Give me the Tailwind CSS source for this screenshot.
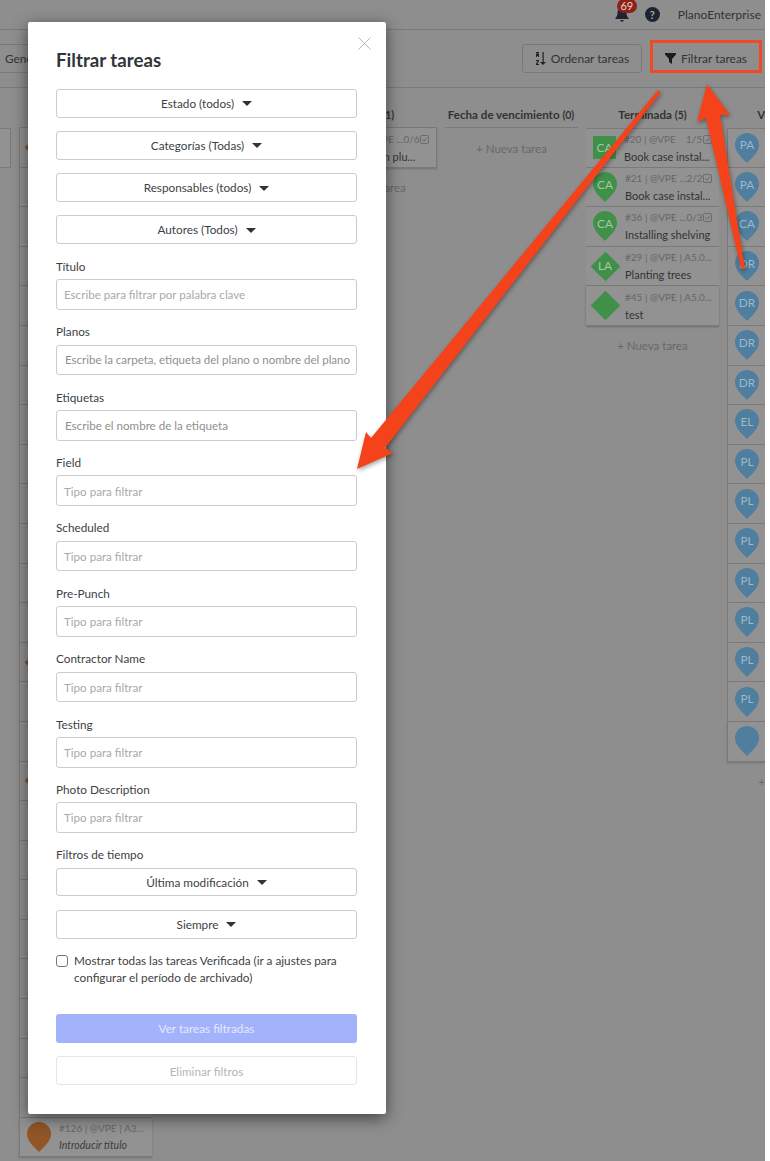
<!DOCTYPE html>
<html lang="es">
<head>
<meta charset="utf-8">
<title>Filtrar tareas</title>
<script src="https://cdn.jsdelivr.net/npm/@tailwindcss/browser@4"></script>
</head>
<body>
<div class="relative w-[770px] h-[1161px] overflow-hidden bg-white font-[Lato,sans-serif] text-[11.75px] text-[#2f2f2f]">
  <div class="w-[765px] h-[1161px] overflow-hidden bg-[#8e8e8f]">
    <!-- header -->
    <div class="h-[30px] border-b border-[#7a7a7a] flex items-center justify-end pr-[4px]">
      <div class="relative w-[24px] h-[30px] mr-[7px]">
        <svg class="absolute left-[1px] top-[7px]" width="14" height="15" viewBox="0 0 14 15"><path fill="#1d2430" d="M7 0c.7 0 1.2.5 1.2 1.1C10.400 1.700 11.500 3.500 11.500 6c0 2.800.8 3.800 2 5v1H.5v-1c1.200-1.200 2-2.200 2-5 0-2.500 1.100-4.300 3.300-4.900C5.800.5 6.300 0 7 0zM5.300 13h3.400a1.700 1.700 0 0 1-3.400 0z"/></svg>
        <span class="absolute left-[3px] top-[-1px] w-[20px] h-[14px] rounded-full bg-[#8f1f17] text-[#e6d5d3] text-[11px] leading-[14px] text-center">69</span>
      </div>
      <span class="w-[15px] h-[15px] rounded-full bg-[#1d2430] text-[#a5a5a5] text-[11px] font-bold leading-[15px] text-center mr-[18px]">?</span>
      <span class="text-[#333] text-[12px] leading-[30px]">PlanoEnterprise</span>
    </div>
    <!-- toolbar -->
    <div class="h-[58px] border-b border-[#7a7a7a] flex items-center justify-end pr-[3px] pb-[1px]">
      <div class="mr-auto -ml-[8px] h-[29px] w-[70px] border border-[#7a7a7a] rounded-[3px] flex items-center pl-[12px] pt-[1px] text-[#333]">Generar</div>
      <div class="h-[29px] w-[120px] border border-[#7a7a7a] rounded-[3px] flex items-center justify-center gap-[5px] pt-[1px] text-[12px] text-[#333] mr-[8px]">
        <svg width="11" height="13" viewBox="0 0 11 13"><path fill="#222" d="M1 0h3v1H3.300v1H4v3H3V4H2v1H1V2h.7V1H1zM1 8h3v1.200L2.300 12H4v1H1v-1.200L2.700 9H1zM7.500 0h1.200v10H11L8 13 5 10h2.500z"/></svg>
        <span>Ordenar tareas</span>
      </div>
      <div class="h-[29px] w-[112px] rounded-[3px] flex items-center justify-center gap-[5px] pt-[1px] text-[12px] text-[#333]">
        <svg width="11" height="11" viewBox="0 0 11 11"><path fill="#1c1c1c" d="M0 0h11v1.500L7 6v5L4 9V6L0 1.500z"/></svg>
        <span>Filtrar tareas</span>
      </div>
    </div>
    <!-- columns -->
    <div class="flex gap-[8px] -ml-[122px] pt-[17px]">
      <!-- column 1, mostly cut off -->
      <div class="w-[133px] shrink-0">
        <div class="h-[23px]"></div>
        <div class="h-[39.6px] border border-[#7a7a7a] bg-[#929293] rounded-[1px]"></div>
      </div>
      <!-- column 2 -->
      <div class="w-[133px] shrink-0">
        <div class="h-[23px] border-b border-[#7a7a7a]"></div>
        <div class="h-[39.6px] border-b border-l border-[#7a7a7a] bg-[#929293] flex items-center pl-[8.500px]"><div class="w-[21px] h-[21px] rotate-45 bg-[#8a5124]"></div></div>
        <div class="h-[39.6px] border-b border-l border-[#7a7a7a] bg-[#929293]"></div>
        <div class="h-[39.6px] border-b border-l border-[#7a7a7a] bg-[#929293]"></div>
        <div class="h-[39.6px] border-b border-l border-[#7a7a7a] bg-[#929293]"></div>
        <div class="h-[39.6px] border-b border-l border-[#7a7a7a] bg-[#929293]"></div>
        <div class="h-[39.6px] border-b border-l border-[#7a7a7a] bg-[#929293]"></div>
        <div class="h-[39.6px] border-b border-l border-[#7a7a7a] bg-[#929293]"></div>
        <div class="h-[39.6px] border-b border-l border-[#7a7a7a] bg-[#929293]"></div>
        <div class="h-[39.6px] border-b border-l border-[#7a7a7a] bg-[#929293]"></div>
        <div class="h-[39.6px] border-b border-l border-[#7a7a7a] bg-[#929293]"></div>
        <div class="h-[39.6px] border-b border-l border-[#7a7a7a] bg-[#929293]"></div>
        <div class="h-[39.6px] border-b border-l border-[#7a7a7a] bg-[#929293]"></div>
        <div class="h-[39.6px] border-b border-l border-[#7a7a7a] bg-[#929293]"></div>
        <div class="h-[39.6px] border-b border-l border-[#7a7a7a] bg-[#929293] flex items-center pl-[8.500px]"><div class="w-[21px] h-[21px] rotate-45 bg-[#8a5124]"></div></div>
        <div class="h-[39.6px] border-b border-l border-[#7a7a7a] bg-[#929293]"></div>
        <div class="h-[39.6px] border-b border-l border-[#7a7a7a] bg-[#929293]"></div>
        <div class="h-[39.6px] border-b border-l border-[#7a7a7a] bg-[#929293] flex items-center pl-[8.500px]"><div class="w-[21px] h-[21px] rotate-45 bg-[#8a5124]"></div></div>
        <div class="h-[39.6px] border-b border-l border-[#7a7a7a] bg-[#929293]"></div>
        <div class="h-[39.6px] border-b border-l border-[#7a7a7a] bg-[#929293]"></div>
        <div class="h-[39.6px] border-b border-l border-[#7a7a7a] bg-[#929293]"></div>
        <div class="h-[39.6px] border-b border-l border-[#7a7a7a] bg-[#929293]"></div>
        <div class="h-[39.6px] border-b border-l border-[#7a7a7a] bg-[#929293]"></div>
        <div class="h-[39.6px] border-b border-l border-[#7a7a7a] bg-[#929293]"></div>
        <div class="h-[39.6px] border-b border-l border-[#7a7a7a] bg-[#929293]"></div>
        <div class="h-[39.6px] border-b border-l border-[#7a7a7a] bg-[#929293]"></div>
        <div class="h-[39.6px] border-b border-l border-[#7a7a7a] bg-[#929293] flex items-center gap-[8px] pl-[7px] shadow-[0_1px_2px_rgba(0,0,0,0.2)]">
          <svg class="shrink-0" width="24" height="30" viewBox="0 0 24 30"><path fill="#915526" d="M12 0a12 12 0 0 1 12 12c0 7-7 13-12 18C7 25 0 19 0 12A12 12 0 0 1 12 0z"/></svg>
          <div class="min-w-0 leading-[17px] whitespace-nowrap"><div class="text-[#666] text-[10px]">#126 | @VPE | A3...</div><div class="italic text-[#3d3d3d] text-[10.5px]">Introducir título</div></div>
        </div>
      </div>
      <div class="w-[136px] shrink-0"></div>
      <!-- column: activa -->
      <div class="w-[133px] shrink-0">
        <div class="h-[23px] border-b border-[#7a7a7a] text-center font-bold text-[11.6px] leading-[20px] text-[#333]">Activa <span class="text-[10.5px]">(1)</span></div>
        <div class="h-[39.6px] bg-[#929293] border-b border-r border-[#7a7a7a] pl-[38px] pr-[7px] pt-[3px] shadow-[0_1px_2px_rgba(0,0,0,0.2)]">
          <div class="flex items-center justify-between text-[#666] text-[10px] leading-[17px] whitespace-nowrap"><span>#12 | @VPE ...0/6</span><svg width="9" height="9" viewBox="0 0 10 10" fill="none" stroke="#666"><rect x=".5" y=".5" width="9" height="9" rx="1.500"/><path d="M2.500 5l2 2 3-4"/></svg></div>
          <div class="text-[#333] text-[11px] leading-[17px] whitespace-nowrap">Bathroom plu...</div>
        </div>
        <div class="h-[39px] leading-[40px] text-center text-[11.5px] text-[#686868]">+ Nueva tarea</div>
      </div>
      <!-- column: fecha -->
      <div class="w-[133px] shrink-0">
        <div class="h-[23px] border-b border-[#7a7a7a] text-center font-bold text-[11.6px] leading-[20px] pr-[1px] text-[#333] whitespace-nowrap">Fecha de vencimiento <span class="text-[10.5px]">(0)</span></div>
        <div class="h-[39px] leading-[42px] text-center text-[11.5px] text-[#686868]">+ Nueva tarea</div>
      </div>
      <!-- column: terminada -->
      <div class="w-[133px] shrink-0">
        <div class="h-[23px] text-center font-bold text-[11.6px] leading-[20px] text-[#333]">Terminada <span class="text-[10.5px]">(5)</span></div>
        <div class="h-[39.6px] bg-[#929293] border-y border-[#7a7a7a] flex items-center gap-[8px] px-[7px]">
          <div class="w-[23px] h-[23px] shrink-0 bg-[#40904a] text-[#a3c9a6] flex items-center justify-center">CA</div>
          <div class="min-w-0 flex-1 leading-[17px]">
            <div class="flex items-center text-[#666] text-[10px] whitespace-nowrap"><span>#20 | @VPE</span><span class="ml-auto mr-[1px]">1/5</span><svg width="9" height="9" viewBox="0 0 10 10" fill="none" stroke="#666"><rect x=".5" y=".5" width="9" height="9" rx="1.500"/><path d="M2.500 5l2 2 3-4"/></svg></div>
            <div class="text-[#333] text-[11px] whitespace-nowrap">Book case instal...</div>
          </div>
        </div>
        <div class="h-[39.6px] bg-[#929293] border-b border-[#7a7a7a] flex items-center gap-[8px] px-[7px]">
          <div class="grid place-items-center shrink-0"><svg class="[grid-area:1/1]" width="24" height="30" viewBox="0 0 24 30"><path fill="#40904a" d="M12 0a12 12 0 0 1 12 12c0 7-7 13-12 18C7 25 0 19 0 12A12 12 0 0 1 12 0z"/></svg><span class="[grid-area:1/1] pb-[5px] text-[#a3c9a6]">CA</span></div>
          <div class="min-w-0 flex-1 leading-[17px]">
            <div class="flex items-center justify-between text-[#666] text-[10px] whitespace-nowrap"><span>#21 | @VPE ...2/2</span><svg width="9" height="9" viewBox="0 0 10 10" fill="none" stroke="#666"><rect x=".5" y=".5" width="9" height="9" rx="1.500"/><path d="M2.500 5l2 2 3-4"/></svg></div>
            <div class="text-[#333] text-[11px] whitespace-nowrap">Book case instal...</div>
          </div>
        </div>
        <div class="h-[39.6px] bg-[#929293] border-b border-[#7a7a7a] flex items-center gap-[8px] px-[7px]">
          <div class="grid place-items-center shrink-0"><svg class="[grid-area:1/1]" width="24" height="30" viewBox="0 0 24 30"><path fill="#40904a" d="M12 0a12 12 0 0 1 12 12c0 7-7 13-12 18C7 25 0 19 0 12A12 12 0 0 1 12 0z"/></svg><span class="[grid-area:1/1] pb-[5px] text-[#a3c9a6]">CA</span></div>
          <div class="min-w-0 flex-1 leading-[17px]">
            <div class="flex items-center justify-between text-[#666] text-[10px] whitespace-nowrap"><span>#36 | @VPE ...0/3</span><svg width="9" height="9" viewBox="0 0 10 10" fill="none" stroke="#666"><rect x=".5" y=".5" width="9" height="9" rx="1.500"/><path d="M2.500 5l2 2 3-4"/></svg></div>
            <div class="text-[#333] text-[11px] whitespace-nowrap">Installing shelving</div>
          </div>
        </div>
        <div class="h-[39.6px] bg-[#929293] border-b border-[#7a7a7a] flex items-center gap-[8px] px-[7px]">
          <div class="w-[24px] h-[24px] shrink-0 grid place-items-center"><div class="[grid-area:1/1] w-[21px] h-[21px] rotate-45 bg-[#40904a]"></div><span class="[grid-area:1/1] relative text-[#a3c9a6]">LA</span></div>
          <div class="min-w-0 flex-1 leading-[17px]">
            <div class="text-[#666] text-[10px] whitespace-nowrap">#29 | @VPE | A5.0...</div>
            <div class="text-[#333] text-[11px] whitespace-nowrap">Planting trees</div>
          </div>
        </div>
        <div class="h-[39.6px] bg-[#929293] border-b border-[#7a7a7a] flex items-center gap-[8px] px-[7px] shadow-[0_1px_2px_rgba(0,0,0,0.25)]">
          <div class="w-[24px] h-[24px] shrink-0 grid place-items-center"><div class="w-[21px] h-[21px] rotate-45 bg-[#40904a]"></div></div>
          <div class="min-w-0 flex-1 leading-[17px]">
            <div class="text-[#666] text-[10px] whitespace-nowrap">#45 | @VPE | A5.0...</div>
            <div class="text-[#333] text-[11px] whitespace-nowrap">test</div>
          </div>
        </div>
        <div class="h-[39px] leading-[40px] text-center text-[11.5px] text-[#686868]">+ Nueva tarea</div>
      </div>
      <!-- column: verificada -->
      <div class="w-[133px] shrink-0">
        <div class="h-[23px] text-center font-bold text-[11.6px] leading-[20px] text-[#333] whitespace-nowrap">Verificada <span class="text-[10.5px]">(16)</span></div>
        <div class="h-[39.6px] bg-[#929293] border-y border-l border-[#7a7a7a] flex items-center pl-[7px]"><div class="grid place-items-center"><svg class="[grid-area:1/1]" width="24" height="30" viewBox="0 0 24 30"><path fill="#4f7e9e" d="M12 0a12 12 0 0 1 12 12c0 7-7 13-12 18C7 25 0 19 0 12A12 12 0 0 1 12 0z"/></svg><span class="[grid-area:1/1] pb-[5px] text-[#9db9cc]">PA</span></div></div>
        <div class="h-[39.6px] bg-[#929293] border-b border-l border-[#7a7a7a] flex items-center pl-[7px]"><div class="grid place-items-center"><svg class="[grid-area:1/1]" width="24" height="30" viewBox="0 0 24 30"><path fill="#4f7e9e" d="M12 0a12 12 0 0 1 12 12c0 7-7 13-12 18C7 25 0 19 0 12A12 12 0 0 1 12 0z"/></svg><span class="[grid-area:1/1] pb-[5px] text-[#9db9cc]">PA</span></div></div>
        <div class="h-[39.6px] bg-[#929293] border-b border-l border-[#7a7a7a] flex items-center pl-[7px]"><div class="grid place-items-center"><svg class="[grid-area:1/1]" width="24" height="30" viewBox="0 0 24 30"><path fill="#4f7e9e" d="M12 0a12 12 0 0 1 12 12c0 7-7 13-12 18C7 25 0 19 0 12A12 12 0 0 1 12 0z"/></svg><span class="[grid-area:1/1] pb-[5px] text-[#9db9cc]">CA</span></div></div>
        <div class="h-[39.6px] bg-[#929293] border-b border-l border-[#7a7a7a] flex items-center pl-[7px]"><div class="grid place-items-center"><svg class="[grid-area:1/1]" width="24" height="30" viewBox="0 0 24 30"><path fill="#4f7e9e" d="M12 0a12 12 0 0 1 12 12c0 7-7 13-12 18C7 25 0 19 0 12A12 12 0 0 1 12 0z"/></svg><span class="[grid-area:1/1] pb-[5px] text-[#9db9cc]">DR</span></div></div>
        <div class="h-[39.6px] bg-[#929293] border-b border-l border-[#7a7a7a] flex items-center pl-[7px]"><div class="grid place-items-center"><svg class="[grid-area:1/1]" width="24" height="30" viewBox="0 0 24 30"><path fill="#4f7e9e" d="M12 0a12 12 0 0 1 12 12c0 7-7 13-12 18C7 25 0 19 0 12A12 12 0 0 1 12 0z"/></svg><span class="[grid-area:1/1] pb-[5px] text-[#9db9cc]">DR</span></div></div>
        <div class="h-[39.6px] bg-[#929293] border-b border-l border-[#7a7a7a] flex items-center pl-[7px]"><div class="grid place-items-center"><svg class="[grid-area:1/1]" width="24" height="30" viewBox="0 0 24 30"><path fill="#4f7e9e" d="M12 0a12 12 0 0 1 12 12c0 7-7 13-12 18C7 25 0 19 0 12A12 12 0 0 1 12 0z"/></svg><span class="[grid-area:1/1] pb-[5px] text-[#9db9cc]">DR</span></div></div>
        <div class="h-[39.6px] bg-[#929293] border-b border-l border-[#7a7a7a] flex items-center pl-[7px]"><div class="grid place-items-center"><svg class="[grid-area:1/1]" width="24" height="30" viewBox="0 0 24 30"><path fill="#4f7e9e" d="M12 0a12 12 0 0 1 12 12c0 7-7 13-12 18C7 25 0 19 0 12A12 12 0 0 1 12 0z"/></svg><span class="[grid-area:1/1] pb-[5px] text-[#9db9cc]">DR</span></div></div>
        <div class="h-[39.6px] bg-[#929293] border-b border-l border-[#7a7a7a] flex items-center pl-[7px]"><div class="grid place-items-center"><svg class="[grid-area:1/1]" width="24" height="30" viewBox="0 0 24 30"><path fill="#4f7e9e" d="M12 0a12 12 0 0 1 12 12c0 7-7 13-12 18C7 25 0 19 0 12A12 12 0 0 1 12 0z"/></svg><span class="[grid-area:1/1] pb-[5px] text-[#9db9cc]">EL</span></div></div>
        <div class="h-[39.6px] bg-[#929293] border-b border-l border-[#7a7a7a] flex items-center pl-[7px]"><div class="grid place-items-center"><svg class="[grid-area:1/1]" width="24" height="30" viewBox="0 0 24 30"><path fill="#4f7e9e" d="M12 0a12 12 0 0 1 12 12c0 7-7 13-12 18C7 25 0 19 0 12A12 12 0 0 1 12 0z"/></svg><span class="[grid-area:1/1] pb-[5px] text-[#9db9cc]">PL</span></div></div>
        <div class="h-[39.6px] bg-[#929293] border-b border-l border-[#7a7a7a] flex items-center pl-[7px]"><div class="grid place-items-center"><svg class="[grid-area:1/1]" width="24" height="30" viewBox="0 0 24 30"><path fill="#4f7e9e" d="M12 0a12 12 0 0 1 12 12c0 7-7 13-12 18C7 25 0 19 0 12A12 12 0 0 1 12 0z"/></svg><span class="[grid-area:1/1] pb-[5px] text-[#9db9cc]">PL</span></div></div>
        <div class="h-[39.6px] bg-[#929293] border-b border-l border-[#7a7a7a] flex items-center pl-[7px]"><div class="grid place-items-center"><svg class="[grid-area:1/1]" width="24" height="30" viewBox="0 0 24 30"><path fill="#4f7e9e" d="M12 0a12 12 0 0 1 12 12c0 7-7 13-12 18C7 25 0 19 0 12A12 12 0 0 1 12 0z"/></svg><span class="[grid-area:1/1] pb-[5px] text-[#9db9cc]">PL</span></div></div>
        <div class="h-[39.6px] bg-[#929293] border-b border-l border-[#7a7a7a] flex items-center pl-[7px]"><div class="grid place-items-center"><svg class="[grid-area:1/1]" width="24" height="30" viewBox="0 0 24 30"><path fill="#4f7e9e" d="M12 0a12 12 0 0 1 12 12c0 7-7 13-12 18C7 25 0 19 0 12A12 12 0 0 1 12 0z"/></svg><span class="[grid-area:1/1] pb-[5px] text-[#9db9cc]">PL</span></div></div>
        <div class="h-[39.6px] bg-[#929293] border-b border-l border-[#7a7a7a] flex items-center pl-[7px]"><div class="grid place-items-center"><svg class="[grid-area:1/1]" width="24" height="30" viewBox="0 0 24 30"><path fill="#4f7e9e" d="M12 0a12 12 0 0 1 12 12c0 7-7 13-12 18C7 25 0 19 0 12A12 12 0 0 1 12 0z"/></svg><span class="[grid-area:1/1] pb-[5px] text-[#9db9cc]">PL</span></div></div>
        <div class="h-[39.6px] bg-[#929293] border-b border-l border-[#7a7a7a] flex items-center pl-[7px]"><div class="grid place-items-center"><svg class="[grid-area:1/1]" width="24" height="30" viewBox="0 0 24 30"><path fill="#4f7e9e" d="M12 0a12 12 0 0 1 12 12c0 7-7 13-12 18C7 25 0 19 0 12A12 12 0 0 1 12 0z"/></svg><span class="[grid-area:1/1] pb-[5px] text-[#9db9cc]">PL</span></div></div>
        <div class="h-[39.6px] bg-[#929293] border-b border-l border-[#7a7a7a] flex items-center pl-[7px]"><div class="grid place-items-center"><svg class="[grid-area:1/1]" width="24" height="30" viewBox="0 0 24 30"><path fill="#4f7e9e" d="M12 0a12 12 0 0 1 12 12c0 7-7 13-12 18C7 25 0 19 0 12A12 12 0 0 1 12 0z"/></svg><span class="[grid-area:1/1] pb-[5px] text-[#9db9cc]">PL</span></div></div>
        <div class="h-[39.6px] bg-[#929293] border-b border-l border-[#7a7a7a] flex items-center pl-[7px] shadow-[0_1px_2px_rgba(0,0,0,0.2)]"><svg width="24" height="30" viewBox="0 0 24 30"><path fill="#4f7e9e" d="M12 0a12 12 0 0 1 12 12c0 7-7 13-12 18C7 25 0 19 0 12A12 12 0 0 1 12 0z"/></svg></div>
        <div class="h-[39px] leading-[40px] text-center text-[11.5px] text-[#686868]">+ Nueva tarea</div>
      </div>
    </div>
  </div>

  <!-- modal -->
  <div class="absolute left-[28px] top-[22px] w-[358px] h-[1092px] bg-white rounded-[2px] shadow-[0_4px_16px_rgba(0,0,0,0.55)] pl-[28px] pr-[29px] pt-[24px] text-[#3c3f45]">
    <svg class="absolute right-[15px] top-[15px]" width="13" height="13" viewBox="0 0 13 13" fill="none" stroke="#b5b5b5"><path d="M.5.5l12 12M12.500.5l-12 12"/></svg>
    <h2 class="h-[28px] mb-[15.3px] text-[18.7px] leading-[28px] font-bold text-[#30343b]">Filtrar tareas</h2>

    <div class="h-[28.5px] mb-[13.5px] border border-[#ccc] rounded-[3px] flex items-center justify-center gap-[8px]">Estado (todos)<svg width="10" height="5" viewBox="0 0 10 5"><path fill="#333" d="M0 0h10L5 5z"/></svg></div>
    <div class="h-[28.5px] mb-[13.5px] border border-[#ccc] rounded-[3px] flex items-center justify-center gap-[8px]">Categorías (Todas)<svg width="10" height="5" viewBox="0 0 10 5"><path fill="#333" d="M0 0h10L5 5z"/></svg></div>
    <div class="h-[28.5px] mb-[13.5px] border border-[#ccc] rounded-[3px] flex items-center justify-center gap-[8px] pt-[1px]">Responsables (todos)<svg width="10" height="5" viewBox="0 0 10 5"><path fill="#333" d="M0 0h10L5 5z"/></svg></div>
    <div class="h-[28.5px] mb-[13.5px] border border-[#ccc] rounded-[3px] flex items-center justify-center gap-[8px] pt-[1px]">Autores (Todos)<svg width="10" height="5" viewBox="0 0 10 5"><path fill="#333" d="M0 0h10L5 5z"/></svg></div>

    <label class="block h-[20px] mb-[2px] leading-[19px]">Título</label>
    <input class="block w-full h-[30.5px] mb-[12.9px] px-[7px] text-[11.6px] border border-[#ccc] rounded-[3px] outline-none placeholder:text-[#a9a9a9]" placeholder="Escribe para filtrar por palabra clave">
    <label class="block h-[20px] mb-[2px] leading-[18px]">Planos</label>
    <input class="block w-full h-[30.5px] mb-[12.9px] pl-[8px] pr-0 text-[11.5px] border border-[#ccc] rounded-[3px] outline-none placeholder:text-[#8f8f8f]" placeholder="Escribe la carpeta, etiqueta del plano o nombre del plano">
    <label class="block h-[20px] mb-[2px] leading-[19px]">Etiquetas</label>
    <input class="block w-full h-[30.5px] mb-[12.9px] pl-[8px] pr-[7px] text-[11.6px] border border-[#ccc] rounded-[3px] outline-none placeholder:text-[#8f8f8f]" placeholder="Escribe el nombre de la etiqueta">
    <label class="block h-[20px] mb-[2px] leading-[19px]">Field</label>
    <input class="block w-full h-[30.5px] mb-[12.9px] px-[7px] pt-[1px] text-[11.6px] border border-[#ccc] rounded-[3px] outline-none placeholder:text-[#a9a9a9]" placeholder="Tipo para filtrar">
    <label class="block h-[20px] mb-[2px] leading-[18px]">Scheduled</label>
    <input class="block w-full h-[30.5px] mb-[12.9px] px-[7px] text-[11.6px] border border-[#ccc] rounded-[3px] outline-none placeholder:text-[#a9a9a9]" placeholder="Tipo para filtrar">
    <label class="block h-[20px] mb-[2px] leading-[19px]">Pre-Punch</label>
    <input class="block w-full h-[30.5px] mb-[12.9px] px-[7px] text-[11.6px] border border-[#ccc] rounded-[3px] outline-none placeholder:text-[#a9a9a9]" placeholder="Tipo para filtrar">
    <label class="block h-[20px] mb-[2px] leading-[18px]">Contractor Name</label>
    <input class="block w-full h-[30.5px] mb-[12.9px] px-[7px] pt-[1px] text-[11.6px] border border-[#ccc] rounded-[3px] outline-none placeholder:text-[#a9a9a9]" placeholder="Tipo para filtrar">
    <label class="block h-[20px] mb-[2px] leading-[19px]">Testing</label>
    <input class="block w-full h-[30.5px] mb-[12.9px] px-[7px] text-[11.6px] border border-[#ccc] rounded-[3px] outline-none placeholder:text-[#a9a9a9]" placeholder="Tipo para filtrar">
    <label class="block h-[20px] mb-[2px] leading-[19px]">Photo Description</label>
    <input class="block w-full h-[30.5px] mb-[12.9px] px-[7px] text-[11.6px] border border-[#ccc] rounded-[3px] outline-none placeholder:text-[#a9a9a9]" placeholder="Tipo para filtrar">

    <label class="block h-[20px] mb-[2px] leading-[18px]">Filtros de tiempo</label>
    <div class="h-[28.5px] mb-[14px] border border-[#ccc] rounded-[3px] flex items-center justify-center gap-[8px] pt-[1px]">Última modificación<svg width="10" height="5" viewBox="0 0 10 5"><path fill="#333" d="M0 0h10L5 5z"/></svg></div>
    <div class="h-[28.5px] mb-[13px] border border-[#ccc] rounded-[3px] flex items-center justify-center gap-[8px]">Siempre<svg width="10" height="5" viewBox="0 0 10 5"><path fill="#333" d="M0 0h10L5 5z"/></svg></div>

    <div class="h-[35px] mb-[27.5px] flex gap-[6px] leading-[17.5px]">
      <span class="shrink-0 w-[12px] h-[12px] mt-[3px] border border-[#777] rounded-[3px]"></span>
      <span>Mostrar todas las tareas Verificada (ir a ajustes para configurar el período de archivado)</span>
    </div>

    <div class="h-[29px] mb-[13px] bg-[#a3b3fb] rounded-[3px] text-[#e3e8fe] flex items-center justify-center">Ver tareas filtradas</div>
    <div class="h-[29px] border border-[#e6e6e6] rounded-[3px] text-[#b4b4b4] flex items-center justify-center pt-[1px]">Eliminar filtros</div>
  </div>

  <!-- red highlight -->
  <div class="absolute left-[650px] top-[40px] w-[112px] h-[33px] border-[3px] border-[#ee4a25]"></div>

  <!-- arrows -->
  <svg class="absolute inset-0 pointer-events-none drop-shadow-[1px_2px_2px_rgba(0,0,0,0.35)]" width="770" height="1161" viewBox="0 0 770 1161">
    <path fill="#f4431a" d="M658 90 661 92 385 448 393 453 357 469 366 432 371 438z"/>
    <path fill="#f4431a" d="M707 84 730 115 720 115 745 269 741 269 706 118 697 122z"/>
  </svg>
</div>
</body>
</html>
